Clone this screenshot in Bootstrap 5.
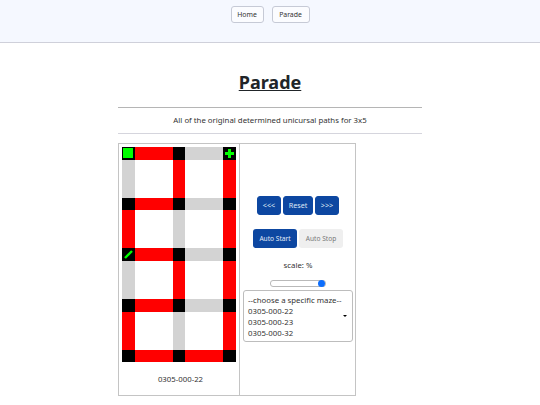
<!DOCTYPE html>
<html lang="en">
<head>
<meta charset="utf-8">
<title>Parade</title>
<link href="https://cdn.jsdelivr.net/npm/bootstrap@5.3.0/dist/css/bootstrap.min.css" rel="stylesheet">
<style>
html,body{overflow:hidden;height:405px}
body{font-family:"Noto Sans",sans-serif;font-size:7.8px;color:#212529;background:#fff}
.top-band{height:43px;background:#f5f8ff;border-bottom:1px solid #cfd0da;padding-top:6px;column-gap:8px}
.top-btn{font-size:6.9px;line-height:10px;padding:2px 0;height:17px;border:1px solid #c6cad6;border-radius:3px;background:#fbfcff;color:#333}
.w-home{width:33px}.w-par{width:38px}
.page-wrap{width:304px;margin-left:118px}
.page-title{font-size:18px;font-weight:700;text-decoration:underline;text-align:center;margin:26px 0 0;line-height:26px}
.rule{margin:12px 0 0;border:0;border-top:1px solid #b5b5b5;opacity:1}
.subline{text-align:center;line-height:12px;margin:6px 0 7px;font-size:7.8px;color:#333}
.rule2{margin:0 0 9px;border:0;border-top:1px solid #d5d5dd;opacity:1}
.panels{width:238px;height:253px;border:1px solid #c4c4c4}
.left-panel{width:121px;border-right:1px solid #c4c4c4;padding:3px 0 0 3px;flex:none}
.right-panel{flex:1;padding:52px 2px 0 3px}
.maze{display:grid;grid-template-columns:12.67px 38px 12.67px 38px 12.67px;grid-template-rows:12.67px 38px 12.67px 38px 12.67px 38px 12.67px 38px 12.67px}
.nd{background:#000;display:flex;align-items:center;justify-content:center}
.r{background:#f00}.g{background:#d3d3d3}.e{background:#fff}
.maze-name{text-align:center;margin-top:11px;line-height:12px;font-size:7.8px;color:#333}
.nav-row,.auto-row{column-gap:2px}
.auto-row{margin-top:14px}
.nav-btn{font-size:7.2px;line-height:11px;padding:3px 0;height:19px;background:#0d47a1;border:1px solid #0d47a1;color:#dfe7f5;border-radius:3px}
.w-a{width:24px}.w-b{width:30px}
.auto-btn{font-size:6.6px;line-height:11px;padding:4px 0;width:44px;height:19px;border-radius:3px;border:0}
.auto-on{background:#0d47a1;color:#e5ecf8}
.auto-off{background:#efefef;color:#777}
.scale-txt{text-align:center;line-height:12px;margin-top:11px;font-size:7.8px;color:#333}
.slider{display:block;width:56px;height:7px;margin:9px auto 0;padding:0;appearance:none;-webkit-appearance:none;background:#fff;border:1px solid #b9b9b9;border-radius:3px}
.slider::-webkit-slider-runnable-track{height:5px;background:transparent}
.slider::-webkit-slider-thumb{-webkit-appearance:none;appearance:none;width:7px;height:7px;margin-top:-1px;border-radius:50%;background:#0d6efd;border:0}
.sel-wrap{position:relative;margin-top:3px}
.sel-wrap::after{content:"";position:absolute;right:6px;top:25px;border-left:2.5px solid transparent;border-right:2.5px solid transparent;border-top:2.5px solid #000;pointer-events:none}
.maze-select{font-size:7.8px;height:52px;padding:3px 12px 0 4px;border-radius:3px;border-color:#bdbdbd;color:#333;overflow:hidden;font-family:"Noto Sans",sans-serif}
.maze-select option{padding:.5px 0}
</style>
</head>
<body>
<div class="top-band d-flex justify-content-center align-items-start">
<button class="btn top-btn w-home">Home</button><button class="btn top-btn w-par">Parade</button>
</div>
<div class="page-wrap">
<h1 class="page-title">Parade</h1>
<hr class="rule">
<p class="subline">All of the original determined unicursal paths for 3x5</p>
<hr class="rule2">
<div class="panels d-flex">
<div class="left-panel">
<div class="maze">
<div class="nd"><svg width="10" height="10" viewBox="0 0 10 10"><rect width="10" height="10" fill="#0f0"/></svg></div><div class="r"></div><div class="nd"></div><div class="g"></div><div class="nd"><svg width="9" height="9" viewBox="0 0 9 9"><path d="M3 0h3v3h3v3H6v3H3V6H0V3h3z" fill="#0f0"/></svg></div>
<div class="g"></div><div class="e"></div><div class="r"></div><div class="e"></div><div class="r"></div>
<div class="nd"></div><div class="r"></div><div class="nd"></div><div class="g"></div><div class="nd"></div>
<div class="r"></div><div class="e"></div><div class="g"></div><div class="e"></div><div class="r"></div>
<div class="nd"><svg width="9" height="9" viewBox="0 0 9 9"><path d="M1 8 8 1" stroke="#0f0" stroke-width="2.4"/></svg></div><div class="r"></div><div class="nd"></div><div class="g"></div><div class="nd"></div>
<div class="g"></div><div class="e"></div><div class="r"></div><div class="e"></div><div class="r"></div>
<div class="nd"></div><div class="r"></div><div class="nd"></div><div class="g"></div><div class="nd"></div>
<div class="r"></div><div class="e"></div><div class="g"></div><div class="e"></div><div class="r"></div>
<div class="nd"></div><div class="r"></div><div class="nd"></div><div class="r"></div><div class="nd"></div>
</div>
<div class="maze-name">0305-000-22</div>
</div>
<div class="right-panel">
<div class="d-flex justify-content-center nav-row">
<button class="btn nav-btn w-a">&lt;&lt;&lt;</button><button class="btn nav-btn w-b">Reset</button><button class="btn nav-btn w-a">&gt;&gt;&gt;</button>
</div>
<div class="d-flex justify-content-center auto-row">
<button class="btn auto-btn auto-on">Auto Start</button><button class="btn auto-btn auto-off">Auto Stop</button>
</div>
<div class="scale-txt">scale: %</div>
<input type="range" class="slider" value="100">
<div class="sel-wrap">
<select class="form-select maze-select" size="4">
<option>--choose a specific maze--</option>
<option>0305-000-22</option>
<option>0305-000-23</option>
<option>0305-000-32</option>
<option>0305-000-33</option>
</select>
</div>
</div>
</div>
</div>
<script src="https://cdn.jsdelivr.net/npm/bootstrap@5.3.0/dist/js/bootstrap.bundle.min.js"></script>
</body>
</html>
